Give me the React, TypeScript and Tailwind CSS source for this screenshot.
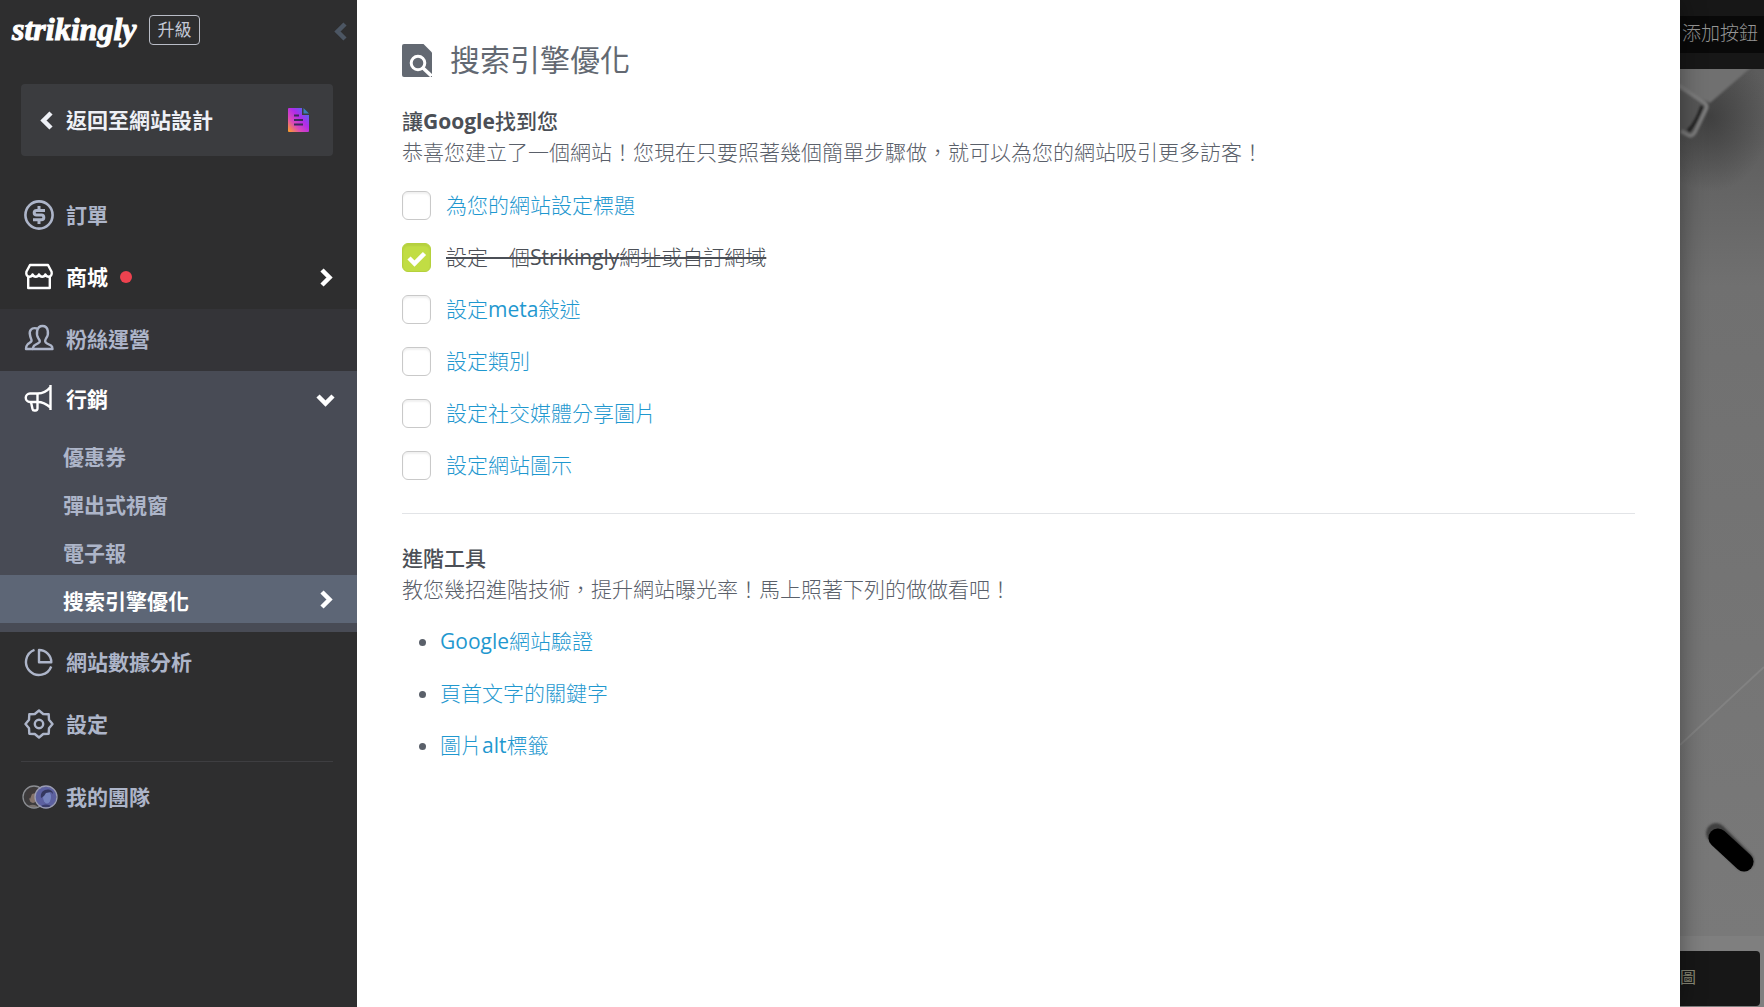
import type { ReactNode } from 'react';

const marketingLinks = [
  { label: '優惠券', active: false },
  { label: '彈出式視窗', active: false },
  { label: '電子報', active: false },
  { label: '搜索引擎優化', active: true },
];

const tasks = [
  { id: 'title', label: '為您的網站設定標題', done: false },
  { id: 'domain', label: '設定一個Strikingly網址或自訂網域', done: true },
  { id: 'meta', label: '設定meta敍述', done: false },
  { id: 'category', label: '設定類別', done: false },
  { id: 'social', label: '設定社交媒體分享圖片', done: false },
  { id: 'favicon', label: '設定網站圖示', done: false },
];

const tools = ['Google網站驗證', '頁首文字的關鍵字', '圖片alt標籤'];

const chevrons = {
  left: 'M13 2L5.5 9.5 13 17',
  right: 'M6 2l7.5 7.5L6 17',
  down: 'M2 6l7.500 7.500L17 6',
};

function Chevron({ direction, className }: { direction: 'left' | 'right' | 'down'; className?: string }) {
  return (
    <svg viewBox="0 0 19 19" className={`size-[19px] shrink-0 ${className ?? ''}`} fill="none" stroke="currentColor" strokeWidth="4.500">
      <path d={chevrons[direction]} />
    </svg>
  );
}

function Icon({ children }: { children: ReactNode }) {
  return (
    <svg viewBox="0 0 30 30" className="size-[30px] shrink-0" fill="none" stroke="currentColor" strokeWidth="2.400" strokeLinejoin="round">
      {children}
    </svg>
  );
}

const OrderIcon = () => (
  <Icon>
    <circle cx="15" cy="15" r="13.600" strokeWidth="2.600" />
    <path d="M21 10.500h-8.500a2.300 2.300 0 0 0 0 4.600h5a2.300 2.300 0 0 1 0 4.600H9M15 6v4M15 20v4" strokeWidth="3" />
  </Icon>
);

const StoreIcon = () => (
  <Icon>
    <path d="M6 3h18l3.600 6.800c.6 3-.8 4.900-3 4.900-1.600 0-2.700-.8-3.200-2.200-.5 1.400-1.600 2.200-3.200 2.200s-2.700-.8-3.200-2.200c-.5 1.400-1.600 2.200-3.200 2.200s-2.700-.8-3.200-2.200c-.5 1.400-1.600 2.200-3.200 2.200-2.200 0-3.600-1.900-3-4.900z" />
    <path d="M4.200 14.500V26h21.600V14.500" />
  </Icon>
);

const PeopleIcon = () => (
  <Icon>
    <path d="M14.500 14.500C12 11 12 2 18.500 2s6.500 9 3.500 12.500c-1.500 2.500-1 4 1 5l4 2c1.500 1 1.500 3.500 1.500 3.500H9c0-2.500 1-3.500 2-4l3.500-2c2-1 1.500-2.500 0-4.500z" />
    <path d="M13 4.500C7 3 5 7 6 11c.5 4 2 4.500 1.500 6S5 19 3.500 20.500C2 22 2 25 2 25h7" />
  </Icon>
);

const MegaphoneIcon = () => (
  <Icon>
    <path d="M26.500 1v25M26.500 3c-4 5-8 6.500-13 6.500H6A4.200 4.200 0 0 0 6 18h7.500c5 0 9 2 13 5.500" />
    <path d="M13.500 9.500v14.800a2 2 0 0 1-2 2.200h-1a2 2 0 0 1-2-1.600L7 18" />
  </Icon>
);

const PieIcon = () => (
  <Icon>
    <path d="M10.500 2.800A13 13 0 1 0 27.200 19.500" />
    <path d="M15 3v12.300h12.300A12.300 12.300 0 0 0 15 3z" />
  </Icon>
);

const GearIcon = () => (
  <Icon>
    <path d="M15 1.500L19.200 5l5.500.3.3 5.500 3.500 4.200-3.500 4.200-.3 5.500-5.500.3-4.200 3.500-4.200-3.500-5.500-.3-.3-5.500L1.500 15 5 10.800l.3-5.500 5.500-.3z" />
    <circle cx="15" cy="15" r="4.200" />
  </Icon>
);

function TeamIcon() {
  return (
    <svg viewBox="0 0 36 24" className="-ml-0.5 h-6 w-9 shrink-0">
      <defs>
        <clipPath id="memberA">
          <circle cx="12" cy="12" r="10.500" />
        </clipPath>
        <clipPath id="memberB">
          <circle cx="24" cy="12" r="10.500" />
        </clipPath>
      </defs>
      <g clipPath="url(#memberA)">
        <rect width="24" height="24" fill="#3d3b3c" />
        <ellipse cx="11" cy="12" rx="4" ry="6" fill="#86746c" />
        <path d="M5 10c0-9 10-9 12-3l-7 2-2 5z" fill="#3f3a3a" />
        <path d="M5 24c0-5 10-6 12 0z" fill="#77706d" />
      </g>
      <circle cx="12" cy="12" r="11" fill="none" stroke="#8b8d92" strokeWidth="1.300" />
      <g clipPath="url(#memberB)">
        <rect x="12" width="24" height="24" fill="#5c60a0" />
        <ellipse cx="25" cy="12" rx="4" ry="6.500" fill="#7683bd" />
        <path d="M19 13c-2-10 12-11 12-4l-2-2-5 1-2 3z" fill="#34375f" />
        <path d="M17 24c2-6 12-6 14 0z" fill="#3a3d6c" />
      </g>
      <circle cx="24" cy="12" r="11" fill="none" stroke="#9a9cb5" strokeWidth="1.300" />
    </svg>
  );
}

// Latin words are set one step heavier than the light Chinese text
function MixedText({ text }: { text: string }) {
  return (
    <>
      {text.split(/([A-Za-z]+)/).map((part, i) =>
        i % 2 ? (
          <span key={i} className="font-normal">
            {part}
          </span>
        ) : (
          part
        ),
      )}
    </>
  );
}

function NavItem({ icon, label, className }: { icon: ReactNode; label: string; className?: string }) {
  return (
    <a href="#" className={`flex h-[62px] items-center gap-3 pb-0.5 pl-6 ${className ?? ''}`}>
      {icon}
      {label}
    </a>
  );
}

function Sidebar() {
  return (
    <aside className="relative z-20 w-[357px] shrink-0 bg-[#2e2e2f] text-[21px] leading-8 font-bold text-[#adb5c9]">
      {/* Logo */}
      <div className="flex h-[84px] items-start pt-3 pl-3">
        <a
          href="#"
          className="w-[125px] font-['Liberation_Serif',serif] text-[32px] leading-[34px] font-bold text-white italic [-webkit-text-stroke:1px_white]"
        >
          strikingly
        </a>
        <button className="mt-[3px] ml-3 h-[30px] w-[51px] rounded-sm border border-[#b9bcc6] pb-0.5 text-[17px] leading-none font-normal text-[#c3c8d6]">
          升級
        </button>
        <button aria-label="收合" className="mt-[10px] mr-1.5 ml-auto text-[#4c5663]">
          <Chevron direction="left" />
        </button>
      </div>

      {/* Back to editor */}
      <div className="pr-6 pl-[21px]">
        <a href="#" className="flex h-[72px] items-center rounded bg-[#3b3c3f] pr-6 pl-[17px] text-[#eef0f6]">
          <Chevron direction="left" />
          <span className="ml-[9px]">返回至網站設計</span>
          <svg viewBox="0 0 21 24" className="ml-auto h-6 w-[21px]">
            <defs>
              <linearGradient id="doc" x1="0" y1="1" x2="0.900" y2="0.100">
                <stop offset="0" stopColor="#ffa51f" />
                <stop offset="0.350" stopColor="#dc48b8" />
                <stop offset="0.650" stopColor="#b02bea" />
                <stop offset="1" stopColor="#4a6df0" />
              </linearGradient>
            </defs>
            <path d="M1 0h13v7h7v16a1 1 0 0 1-1 1H1a1 1 0 0 1-1-1V1a1 1 0 0 1 1-1z" fill="url(#doc)" />
            <path d="M15.500 0L21 5.500h-5.500z" fill="#3a7fb5" />
            <path d="M6 7.500h5M6 12h9M6 16.500h9" stroke="#3b2b5c" strokeWidth="2" />
          </svg>
        </a>
      </div>

      {/* Menu */}
      <nav className="mt-[29px]">
        <NavItem icon={<OrderIcon />} label="訂單" />
        <a href="#" className="flex h-[62px] items-center pr-[22px] pb-0.5 pl-6 text-white">
          <StoreIcon />
          <span className="ml-3">商城</span>
          <span className="ml-3 size-3 rounded-full bg-[#ee424f]" />
          <Chevron direction="right" className="ml-auto" />
        </a>
        <NavItem icon={<PeopleIcon />} label="粉絲運營" className="bg-[#343438]" />

        <div className="bg-[#484b55] pb-[9px]">
          <a href="#" className="flex h-[60px] items-center pr-[22px] pb-1 pl-6 text-white">
            <MegaphoneIcon />
            <span className="ml-3">行銷</span>
            <Chevron direction="down" className="ml-auto" />
          </a>
          {marketingLinks.map((link) => (
            <a
              key={link.label}
              href="#"
              className={
                link.active
                  ? 'flex h-12 items-center justify-between bg-[#5d6676] pr-[22px] pl-[63px] text-white'
                  : 'flex h-12 items-center pl-[63px]'
              }
            >
              <span className="pt-1">{link.label}</span>
              {link.active && <Chevron direction="right" />}
            </a>
          ))}
        </div>

        <NavItem icon={<PieIcon />} label="網站數據分析" />
        <NavItem icon={<GearIcon />} label="設定" />
        <hr className="mr-6 ml-[21px] mt-[5px] mb-[5px] border-[#3e3e41]" />
        <a href="#" className="flex h-[62px] items-center gap-2 pb-0.5 pl-6">
          <TeamIcon />
          我的團隊
        </a>
      </nav>
    </aside>
  );
}

function SeoPanel() {
  return (
    <main className="z-10 min-w-0 flex-1 bg-white px-[45px] pt-[42px] text-[21px] leading-[31px] font-light text-[#5a606a] shadow-[0_0_24px_rgba(0,0,0,0.4)]">
      <header className="flex h-9 items-center gap-[18px]">
        <svg viewBox="0 0 30 33" className="h-[33px] w-[30px]">
          <path d="M2 0h19.500L30 8.500V33H2a2 2 0 0 1-2-2V2a2 2 0 0 1 2-2z" fill="#636972" />
          <circle cx="16" cy="19" r="6.800" fill="none" stroke="#fff" strokeWidth="3" />
          <path d="M21 24l8.500 8" stroke="#fff" strokeWidth="3.500" />
        </svg>
        <h1 className="text-[30px] leading-9 font-normal text-[#636972]">搜索引擎優化</h1>
      </header>

      <section className="mt-7">
        <h2 className="font-medium text-[#4b4f56]">
          讓<b className="font-bold">Google</b>找到您
        </h2>
        <p>恭喜您建立了一個網站！您現在只要照著幾個簡單步驟做，就可以為您的網站吸引更多訪客！</p>

        <ul className="mt-[23px] flex flex-col gap-[23px]">
          {tasks.map((task) => (
            <li key={task.id} className="flex h-[29px] items-center gap-[15px]">
              <span className="relative size-[29px]">
                <input
                  type="checkbox"
                  id={task.id}
                  aria-labelledby={`${task.id}-label`}
                  defaultChecked={task.done}
                  className="peer block size-[29px] appearance-none rounded-md border border-[#c9c9c9] bg-white shadow-[inset_0_2px_2px_rgba(0,0,0,0.06)] checked:border-[#b5d13c] checked:bg-[#c1dd44]"
                />
                <svg
                  viewBox="0 0 29 29"
                  className="pointer-events-none absolute inset-0 hidden peer-checked:block"
                  fill="none"
                  stroke="#fff"
                  strokeWidth="4.500"
                >
                  <path d="M7 15l5.500 5.500L22.500 10.500" />
                </svg>
              </span>
              {task.done ? (
                <label htmlFor={task.id} id={`${task.id}-label`} className="text-[#4b4f56] line-through decoration-2">
                  <MixedText text={task.label} />
                </label>
              ) : (
                <a href="#" id={`${task.id}-label`} className="text-[#1f98cf]">
                  <MixedText text={task.label} />
                </a>
              )}
            </li>
          ))}
        </ul>
      </section>

      <hr className="mt-[33px] border-[#e2e4e7]" />

      <section className="mt-[29px]">
        <h2 className="font-medium text-[#4b4f56]">進階工具</h2>
        <p>教您幾招進階技術，提升網站曝光率！馬上照著下列的做做看吧！</p>
        <ul className="mt-[21px] flex list-disc flex-col gap-[21px] pl-[38px]">
          {tools.map((tool) => (
            <li key={tool}>
              <a href="#" className="text-[#1f98cf]">
                <MixedText text={tool} />
              </a>
            </li>
          ))}
        </ul>
      </section>
    </main>
  );
}

// Dimmed strip of the site editor behind the panel
function SitePreview() {
  return (
    <div className="flex w-[84px] shrink-0 flex-col overflow-hidden bg-[#7f7f7f]">
      <div className="bg-[#171717] py-4">
        <button className="block h-[37px] w-full bg-[#090909] pb-0.5 pl-0.5 text-left text-[19px] font-light whitespace-nowrap text-[#959595]">
          添加按鈕
        </button>
      </div>
      <svg viewBox="0 0 84 867" preserveAspectRatio="xMinYMin slice" className="min-h-0 w-full flex-1">
        <defs>
          <linearGradient id="wall" x1="0" y1="0" x2="0" y2="1">
            <stop offset="0" stopColor="#5c5c5c" />
            <stop offset="0.080" stopColor="#5e5e5e" />
            <stop offset="0.250" stopColor="#707070" />
            <stop offset="1" stopColor="#797979" />
          </linearGradient>
          <radialGradient id="shade">
            <stop offset="0" stopColor="#333" stopOpacity="0.700" />
            <stop offset="1" stopColor="#333" stopOpacity="0" />
          </radialGradient>
          <filter id="soft" filterUnits="userSpaceOnUse" x="-20" y="-20" width="124" height="907">
            <feGaussianBlur stdDeviation="1" />
          </filter>
        </defs>
        <rect width="84" height="867" fill="url(#wall)" />
        <ellipse cx="30" cy="48" rx="60" ry="75" fill="url(#shade)" />
        <g filter="url(#soft)">
          <path d="M-4-4h78L30 34 0 18z" fill="#6f6f6f" />
          <path d="M-4 17l26 19L8 63l-12-4z" fill="#575757" />
          <path d="M22 37q-5 16-14 25" fill="none" stroke="#252525" strokeWidth="4" />
          <path d="M-2 16l25 17q5 3 3 7L15 63q-3 5-7 3l-7-4" fill="none" stroke="#7c7c7c" strokeWidth="4" strokeLinejoin="round" />
        </g>
        <path d="M0 676l84-78" stroke="#828282" strokeWidth="2" />
        <path d="M36 764l28 28" stroke="#404040" strokeWidth="20" strokeLinecap="round" filter="url(#soft)" />
        <path d="M38 769l26 24" stroke="#000" strokeWidth="19" strokeLinecap="round" />
      </svg>
      <div className="h-[71px] pt-[15px] pr-1">
        <button className="block h-[55px] w-full rounded-r bg-[#171717] pb-1 text-left text-base text-[#8a8a78]">圖</button>
      </div>
    </div>
  );
}

export default function App() {
  return (
    <div className="flex min-h-screen bg-white font-['Open_Sans','Noto_Sans_CJK_TC',sans-serif]">
      <Sidebar />
      <SeoPanel />
      <SitePreview />
    </div>
  );
}
